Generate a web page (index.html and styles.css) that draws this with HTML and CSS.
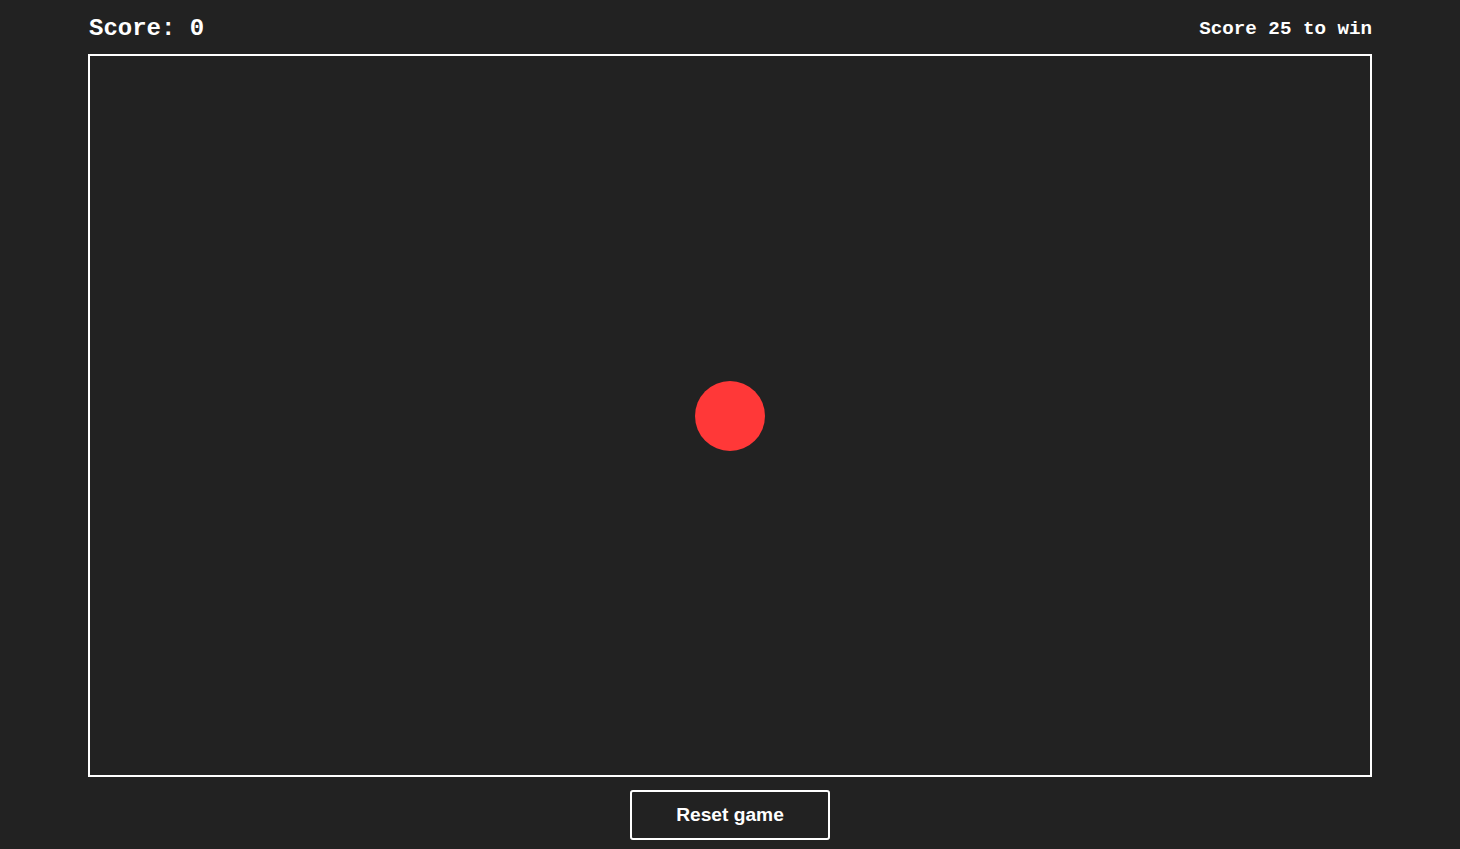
FILE: index.html
```html
<!DOCTYPE html>
<html>
<head>
<meta charset="utf-8">
<link rel="stylesheet" href="styles.css">
</head>
<body>
<div class="wrap">
  <header class="top">
    <div class="score">Score: 0</div>
    <div class="goal">Score 25 to win</div>
  </header>
  <div class="board">
    <div class="ball"></div>
  </div>
  <div class="actions">
    <button class="reset">Reset game</button>
  </div>
</div>
</body>
</html>
```

FILE: styles.css
```css
html, body {
  margin: 0;
  padding: 0;
  background: #222222;
  color: #ffffff;
}
.wrap {
  width: 1284px;
  margin: 0 auto;
  padding-top: 15px;
}
.top {
  display: flex;
  justify-content: space-between;
  align-items: center;
  font-family: "Liberation Mono", "Courier New", monospace;
  font-weight: bold;
  margin-bottom: 12px;
}
.score {
  font-size: 24px;
  margin-left: 1px;
}
.goal {
  font-size: 19.2px;
}
.board {
  width: 1280px;
  height: 719px;
  border: 2px solid #ffffff;
  display: flex;
  align-items: center;
  justify-content: center;
}
.ball {
  width: 70px;
  height: 70px;
  border-radius: 50%;
  background: #ff3838;
}
.actions {
  display: flex;
  justify-content: center;
  margin-top: 13px;
}
.reset {
  width: 200px;
  height: 50px;
  background: transparent;
  border: 2px solid #ffffff;
  border-radius: 3px;
  color: #ffffff;
  font-family: "Liberation Sans", Arial, sans-serif;
  font-weight: bold;
  font-size: 19.2px;
}
```
